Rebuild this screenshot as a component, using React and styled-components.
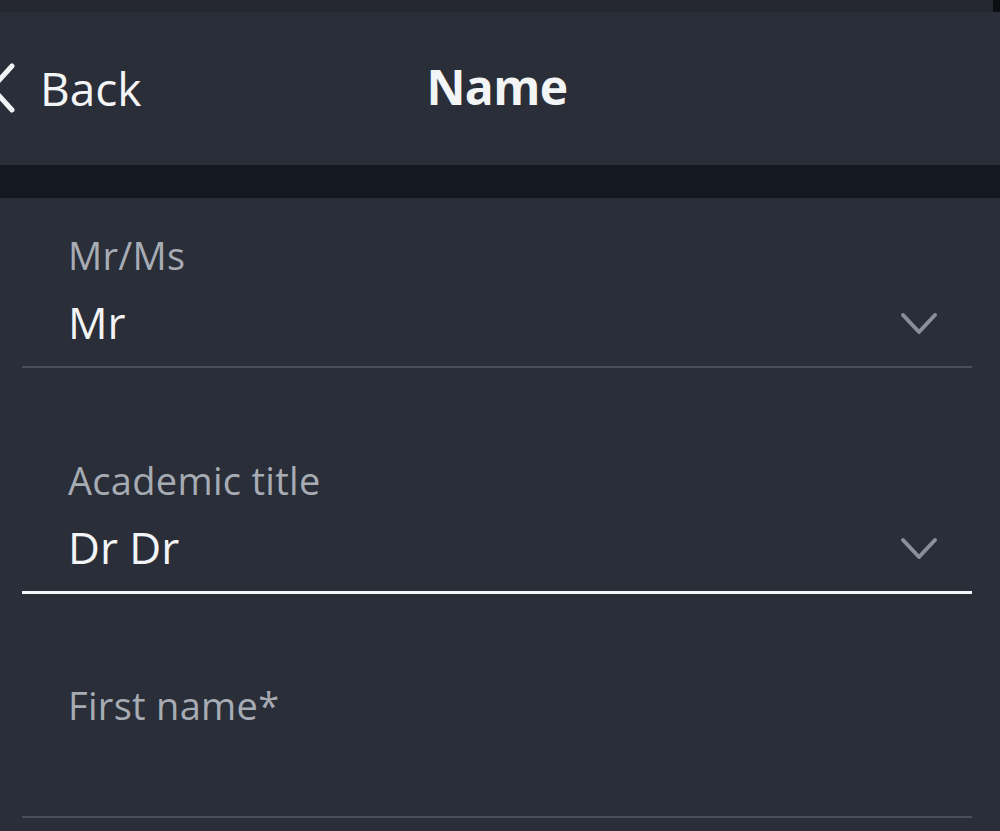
import React from "react";
import styled, { createGlobalStyle } from "styled-components";

const GlobalStyle = createGlobalStyle`
  html, body {
    margin: 0;
    padding: 0;
    background: #2a2e38;
  }
  body {
    font-family: "Open Sans", "Noto Sans", sans-serif;
    -webkit-font-smoothing: antialiased;
  }
`;

const fields = [
  { label: "Mr/Ms", value: "Mr", select: true },
  { label: "Academic title", value: "Dr Dr", select: true, active: true },
  { label: "First name*", value: "", select: false },
];

const ChevronDown = () => (
  <Chevron width="38" height="24" viewBox="0 0 38 24">
    <path
      d="M3 3 L19 20 L35 3"
      fill="none"
      stroke="#8a8e98"
      strokeWidth="4"
      strokeLinecap="round"
      strokeLinejoin="round"
    />
  </Chevron>
);

const App = () => {
  return (
    <Screen>
      <GlobalStyle />
      <StatusStrip />
      <Header>
        <BackButton>
          <svg width="30" height="52" viewBox="0 0 30 52">
            <path
              d="M12 4 L-8 26 L12 48"
              fill="none"
              stroke="#f3f4f6"
              strokeWidth="5"
              strokeLinecap="round"
              strokeLinejoin="round"
            />
          </svg>
          <span>Back</span>
        </BackButton>
        <Title>Name</Title>
        <span />
      </Header>
      <Band />
      <Form>
        {fields.map((f) => (
          <Field key={f.label} active={f.active}>
            <Label>{f.label}</Label>
            <ValueRow>
              <Value>{f.value}</Value>
              {f.select && <ChevronDown />}
            </ValueRow>
          </Field>
        ))}
      </Form>
    </Screen>
  );
};

export default App;

const Screen = styled.div`
  width: 1000px;
  height: 831px;
  overflow: hidden;
  background: #2a2e38;
  display: flex;
  flex-direction: column;
`;

const StatusStrip = styled.div`
  height: 12px;
  background: #252830;
  border-right: 7px solid #0c0d10;
`;

const Header = styled.header`
  height: 153px;
  display: grid;
  grid-template-columns: 1fr auto 1fr;
  align-items: center;
  color: #f3f4f6;
`;

const BackButton = styled.div`
  display: flex;
  align-items: center;
  gap: 10px;
  font-size: 46px;
  margin-top: -2px;

  svg {
    flex-shrink: 0;
  }
`;

const Title = styled.h1`
  margin: 0;
  font-size: 48px;
  font-weight: 700;
  letter-spacing: -0.6px;
  margin-top: -4px;
  margin-left: -6px;
`;

const Band = styled.div`
  height: 33px;
  background: #141820;
`;

const Form = styled.div`
  display: flex;
  flex-direction: column;
  gap: 55px;
  padding: 0 28px 0 22px;
`;

const Field = styled.div`
  padding: 34px 34px 0 46px;
  border-bottom: ${(p) => (p.active ? "3px solid #f5f6f8" : "2px solid #4a4e58")};
  margin-bottom: ${(p) => (p.active ? "-1px" : "0")};
  display: flex;
  flex-direction: column;
`;

const Label = styled.div`
  font-size: 38px;
  line-height: 46px;
  color: #a7abb4;
  letter-spacing: 0.3px;
`;

const ValueRow = styled.div`
  display: flex;
  align-items: center;
  justify-content: space-between;
  height: 88px;
`;

const Value = styled.div`
  font-size: 44px;
  color: #f3f4f6;
`;

const Chevron = styled.svg`
  margin-top: 4px;
`;
